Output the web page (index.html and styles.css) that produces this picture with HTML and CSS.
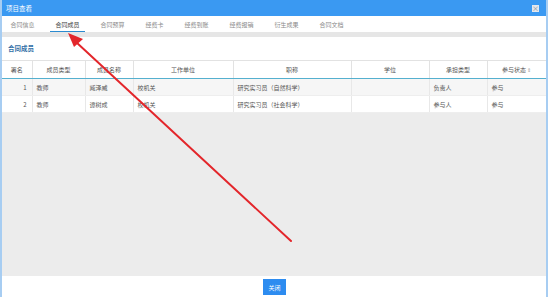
FILE: index.html
```html
<!DOCTYPE html>
<html lang="zh">
<head>
<meta charset="utf-8">
<title>项目查看</title>
<link rel="stylesheet" href="styles.css">
</head>
<body>
<div class="dialog">
  <div class="titlebar">
    <span class="title">项目查看</span>
    <span class="close">×</span>
  </div>
  <div class="tabs">
    <span class="tab">合同信息</span>
    <span class="tab active">合同成员</span>
    <span class="tab">合同预算</span>
    <span class="tab">经费卡</span>
    <span class="tab">经费到账</span>
    <span class="tab">经费报销</span>
    <span class="tab">衍生成果</span>
    <span class="tab">合同文档</span>
  </div>
  <div class="strip"></div>
  <div class="content">
    <div class="section">
      <div class="section-title">合同成员</div>
      <table class="grid">
        <colgroup>
          <col style="width:30px"><col style="width:53px"><col style="width:48px"><col style="width:100px"><col style="width:118px"><col style="width:78px"><col style="width:58px"><col>
        </colgroup>
        <thead>
          <tr><th>署名</th><th>成员类型</th><th>成员名称</th><th>工作单位</th><th>职称</th><th>学位</th><th>承担类型</th><th>参与状态 <span class="sort">⇕</span></th></tr>
        </thead>
        <tbody>
          <tr class="hl"><td class="num">1</td><td>教师</td><td>臧泽威</td><td>校机关</td><td>研究实习员（自然科学）</td><td></td><td>负责人</td><td>参与</td></tr>
          <tr><td class="num">2</td><td>教师</td><td>谭树成</td><td>校机关</td><td>研究实习员（社会科学）</td><td></td><td>参与人</td><td>参与</td></tr>
        </tbody>
      </table>
    </div>
    <div class="empty"></div>
  </div>
  <div class="footer">
    <button class="btn">关闭</button>
  </div>
  <svg class="arrow" width="548" height="297" viewBox="0 0 548 297">
    <line x1="291" y1="241" x2="76" y2="42" stroke="#e3262b" stroke-width="2" stroke-linecap="round"/>
    <polygon points="68,33 83,39 74,47" fill="#e3262b"/>
  </svg>
</div>
</body>
</html>
```

FILE: styles.css
```css
* { box-sizing: border-box; }
html, body { margin: 0; padding: 0; }
body {
  font-family: "Noto Sans CJK SC", "Noto Sans", sans-serif;
  font-size: 6px;
  color: #555;
  background: #fff;
}
.dialog {
  position: relative;
  width: 548px;
  height: 297px;
  display: flex;
  flex-direction: column;
  border-left: 2px solid #a7cdf2;
  border-right: 2px solid #a7cdf2;
  overflow: hidden;
}
.titlebar {
  height: 16px;
  background: #3a99f2;
  margin: 0 -2px;
  padding: 0 6px 0 6px;
  display: flex;
  align-items: center;
  justify-content: space-between;
  color: #fff;
}
.title { font-size: 6.5px; }
.close {
  width: 7px;
  height: 7px;
  background: #e4e8ee;
  color: #7a8694;
  font-size: 7px;
  line-height: 7px;
  text-align: center;
  margin-right: 3px;
}
.tabs {
  height: 16px;
  display: flex;
  align-items: stretch;
  background: #fff;
}
.tab {
  position: relative;
  padding: 0 10.5px;
  display: flex;
  align-items: center;
  color: #8a8a8a;
  white-space: nowrap;
}
.tab:first-child { margin-left: -2px; }
.tab.active { color: #3a3a3a; }
.tab.active::after {
  content: "";
  position: absolute;
  left: 5px;
  right: 5px;
  bottom: 0;
  height: 1px;
  background: #2b8bd0;
}
.strip {
  height: 5px;
  background: #e6e6e6;
}
.content {
  flex: 1;
  display: flex;
  flex-direction: column;
  background: #ececec;
}
.section { background: #fff; }
.section-title {
  height: 23px;
  padding: 6px 0 0 6px;
  font-size: 6.5px;
  font-weight: bold;
  color: #2f6ea6;
}
.grid {
  width: 100%;
  border-collapse: collapse;
  table-layout: fixed;
}
.grid th {
  height: 18px;
  font-weight: normal;
  color: #555;
  text-align: center;
  border-top: 1px solid #e2e2e2;
  border-right: 1px solid #e2e2e2;
  border-bottom: 1px solid #55b0cf;
  padding: 0;
}
.grid td {
  height: 17px;
  padding: 0 4px;
  border-right: 1px solid #e8e8e8;
  border-bottom: 1px solid #eeeeee;
  white-space: nowrap;
  color: #555;
}
.grid th:last-child, .grid td:last-child { border-right: none; }
.grid td.num { text-align: right; padding-right: 5px; }
.grid tr.hl td { background: #f6f6f6; }
.sort { color: #999; font-size: 5px; }
.empty { flex: 1; }
.footer {
  height: 21px;
  background: #fff;
  display: flex;
  justify-content: center;
  align-items: flex-start;
  padding-top: 3px;
}
.btn {
  width: 23px;
  height: 16px;
  border: none;
  background: #2d8cf0;
  color: #fff;
  font-family: inherit;
  font-size: 6px;
  padding: 0;
  margin-left: 1px;
}
.arrow {
  position: absolute;
  left: -2px;
  top: 0;
  pointer-events: none;
}
```
